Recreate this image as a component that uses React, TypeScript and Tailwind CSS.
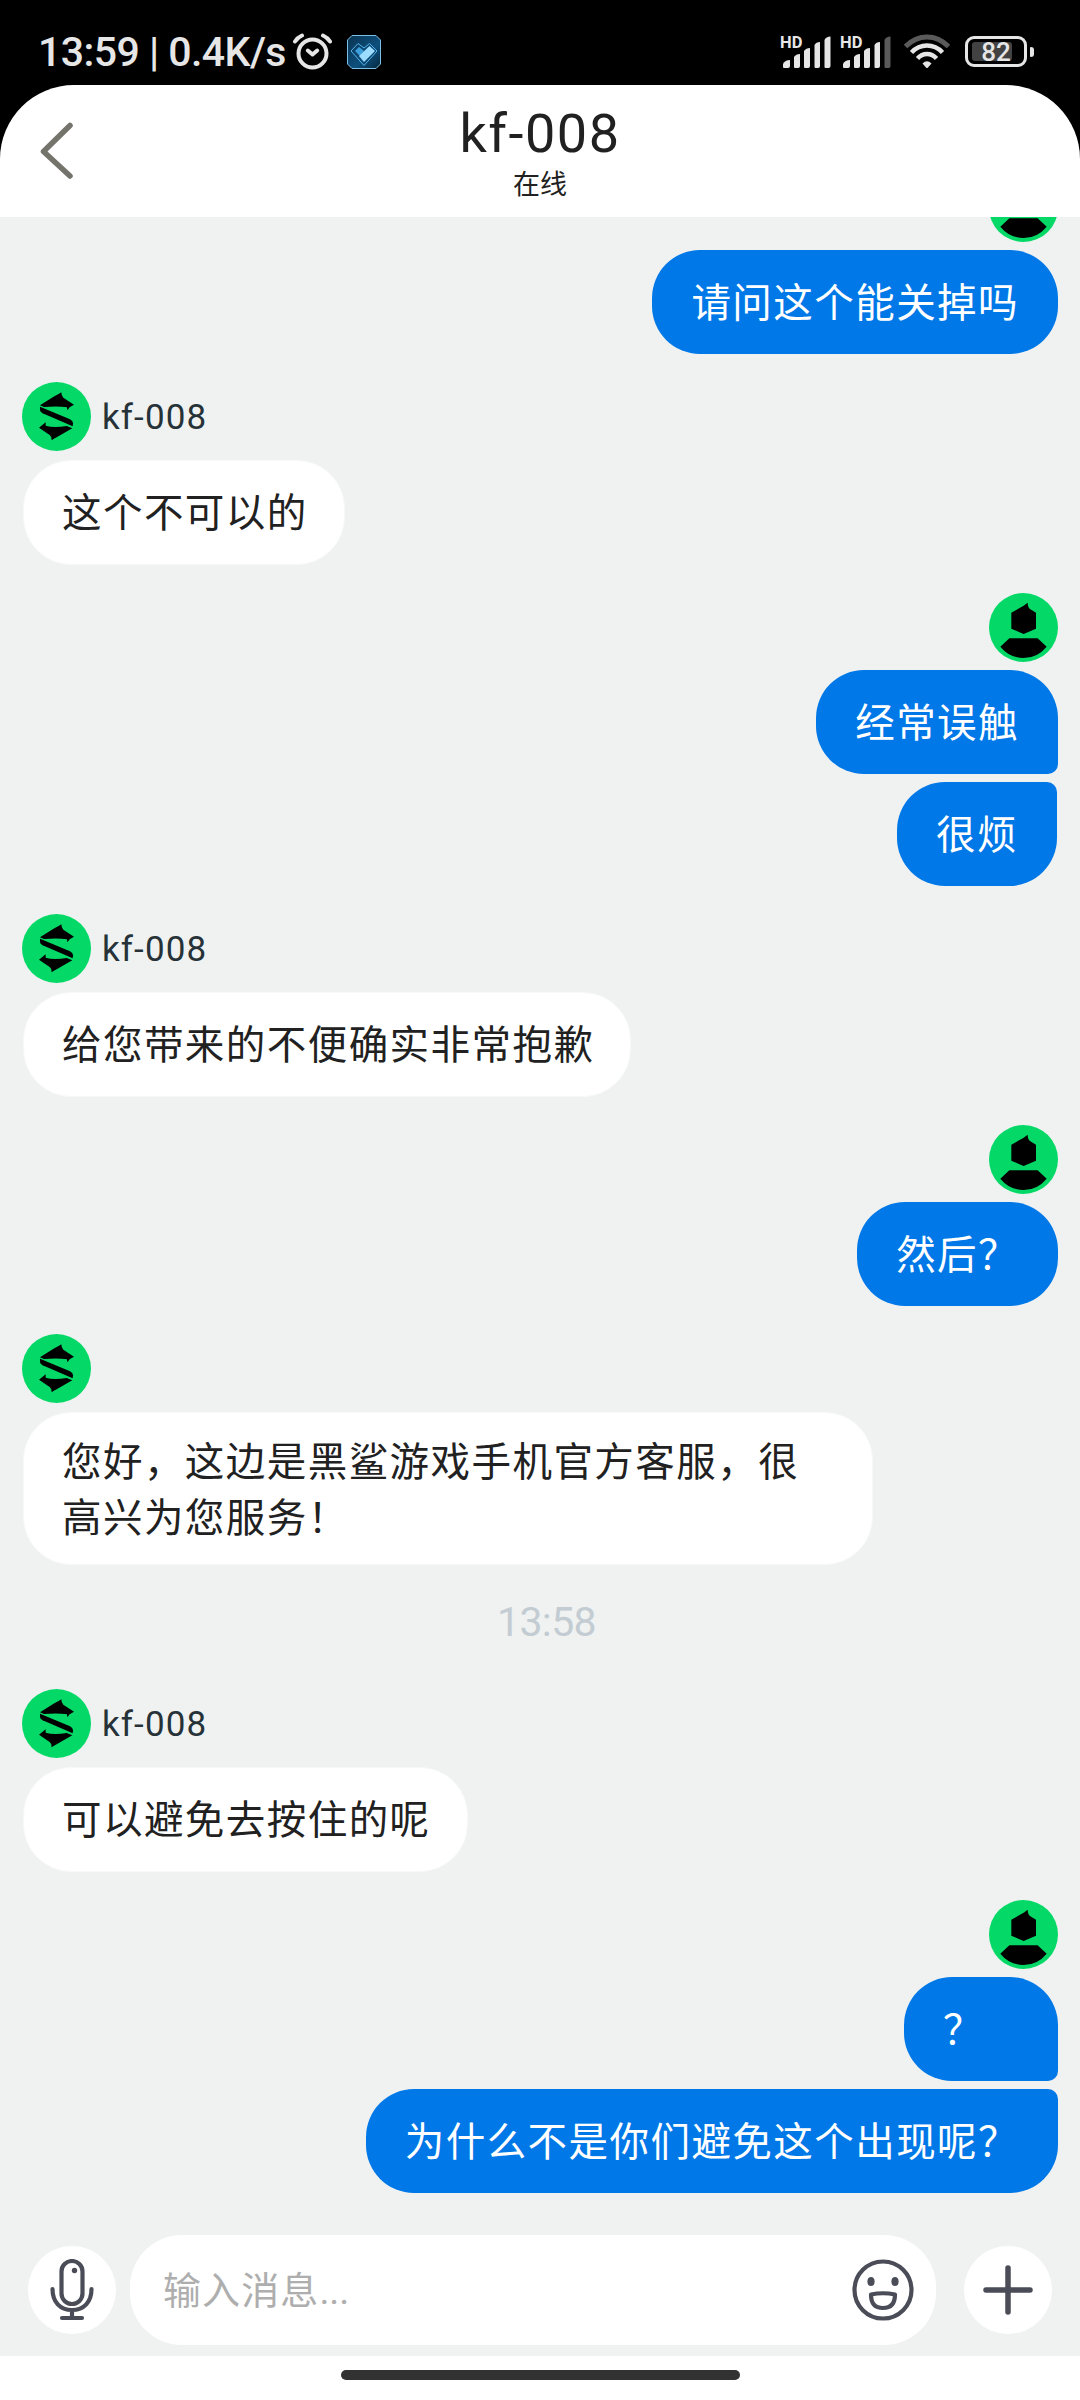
import clsx from 'clsx'

type Message = {
  id: number
  text: string
  shape?: string
}

type Group = {
  id: number
  from: 'me' | 'agent'
  name?: string
  time?: string
  messages: Message[]
}

const GROUPS: Group[] = [
  { id: 1, from: 'me', messages: [{ id: 1, text: '请问这个能关掉吗' }] },
  { id: 2, from: 'agent', name: 'kf-008', messages: [{ id: 2, text: '这个不可以的' }] },
  {
    id: 3,
    from: 'me',
    messages: [
      { id: 3, text: '经常误触', shape: 'rounded-br-[10px]' },
      { id: 4, text: '很烦', shape: 'rounded-tr-[10px] mr-px' },
    ],
  },
  { id: 4, from: 'agent', name: 'kf-008', messages: [{ id: 5, text: '给您带来的不便确实非常抱歉' }] },
  { id: 5, from: 'me', messages: [{ id: 6, text: '然后？' }] },
  { id: 6, from: 'agent', messages: [{ id: 7, text: '您好，这边是黑鲨游戏手机官方客服，很高兴为您服务！' }] },
  { id: 7, from: 'agent', name: 'kf-008', time: '13:58', messages: [{ id: 8, text: '可以避免去按住的呢' }] },
  {
    id: 8,
    from: 'me',
    messages: [
      { id: 9, text: '？', shape: 'rounded-br-[10px]' },
      { id: 10, text: '为什么不是你们避免这个出现呢？', shape: 'rounded-tr-[10px]' },
    ],
  },
]

function AgentAvatar() {
  return (
    <svg viewBox="0 0 207 207" className="size-[69px] shrink-0">
      <circle cx="103.5" cy="103.5" r="103.5" fill="#04d967" />
      <path d="M54 70 L97 43 Q110 37 118 31 Q118 42 124 47 L156 68 L143 76 L136 85 L135 76 Q108 71 66 75 Z" />
      <path d="M54 74 L144 112 Q153 116 153 124 L152 133 L62 94 Q54 90 54 84 Z" />
      <path d="M51 137 L71 121 L71 131 Q95 139 134 132 L151 139 L104 166 Q95 171 89 175 Q90 164 83 159 Z" />
    </svg>
  )
}

function UserAvatar() {
  return (
    <svg viewBox="0 0 207 207" className="size-[69px] shrink-0">
      <circle cx="103.5" cy="103.5" r="103.5" fill="#04d967" />
      <path d="M67 59 L104 38 L116 29 Q116 43 124 49 L141 59 V107 L104 123 L67 107 Z" />
      <path d="M61 136 H146 L173 161 Q145 195 104 195 Q62 195 34 161 Z" />
    </svg>
  )
}

function Signal({ weak }: { weak?: boolean }) {
  return (
    <svg viewBox="0 0 50 34" className="h-[34px] w-[50px] overflow-visible" fill="#e6e6e6">
      <text x="-1" y="12.5" fontSize="16.5" fontWeight="700" fontFamily="Roboto, sans-serif">HD</text>
      <path d="M2 32 V29 Q4 25 9 25 V31 Q9 33 7 33 H3 Q2 33 2 32 Z" />
      <path d="M13 32 V22 Q15 19 19 19 V31 Q19 33 17 33 H14 Q13 33 13 32 Z" />
      <path d="M23 32 V16 Q25 13 29 13 V31 Q29 33 27 33 H24 Q23 33 23 32 Z" />
      <path d="M33.500 32 V10 Q35 7 39 7 V31 Q39 33 37 33 H34.500 Q33.500 33 33.500 32 Z" />
      <path
        d="M43.500 32 V5 Q45 1.500 49.500 1.500 V31 Q49.500 33 47.500 33 H44.500 Q43.500 33 43.500 32 Z"
        fill={weak ? '#5a5a5a' : '#e6e6e6'}
      />
    </svg>
  )
}

function StatusBar() {
  return (
    <div className="flex h-[85px] items-start justify-between pt-[33px] pr-[46px] pl-[38px]">
      <div className="flex h-[37px] items-center">
        <span className="w-[254px] pt-[2px] text-[41px] leading-[37px] font-medium tracking-[-0.55px] whitespace-pre text-[#e6e6e6]">
          13:59 | 0.4K/s
        </span>
        <svg viewBox="0 0 40 37" className="h-[37px] w-[40px]" fill="none" stroke="#e6e6e6" strokeWidth="4" strokeLinecap="round">
          <circle cx="20.500" cy="20.500" r="14" />
          <path d="M15.800 17.500 L20.500 21.500 L25.200 17.500" strokeLinejoin="round" />
          <path d="M3 8.500 Q5.500 4.500 10 2.500 M38 8.500 Q35.500 4.500 31 2.500" />
        </svg>
        <svg viewBox="0 0 34 34" className="ml-[15px] size-[34px]">
          <defs>
            <linearGradient id="app" x1="0" y1="0" x2="1" y2="1">
              <stop offset="0" stopColor="#0a3350" />
              <stop offset="0.6" stopColor="#0d4f7c" />
              <stop offset="1" stopColor="#06283f" />
            </linearGradient>
          </defs>
          <path d="M5 .5 H29 L33.500 5 V29 L29 33.500 H5 L.5 29 V5 Z" fill="url(#app)" stroke="#7cc0e6" />
          <path d="M4 16 L11 8.500 L17 13 L22.500 8.500 L30 16 L17 30.500 Z" fill="none" stroke="#54b4ea" />
          <path d="M8 16 L12 12 L17 16 L13 21 Z" fill="#3c9fdc" />
          <path d="M12 21 L22.500 11 L28 16 L17 27 Z" fill="#9bdcff" />
        </svg>
      </div>
      <div className="flex h-[37px] items-center">
        <Signal />
        <div className="w-[10px]" />
        <Signal weak />
        <svg viewBox="0 0 46 35" className="ml-[13px] h-[35px] w-[46px]" fill="none" stroke="#e6e6e6" strokeWidth="4.500">
          <path d="M1.500 12.500 Q11 3 23 3 T44.500 12.500" stroke="#5a5a5a" strokeWidth="5" />
          <path d="M7.500 18.500 Q14 11.500 23 11.500 T38.500 18.500" />
          <path d="M13.500 24.500 Q17.500 20 23 20 T32.500 24.500" />
          <path d="M18.500 29.500 Q23 25 27.500 29.500 L24 33.500 Q23 34.500 22 33.500 Z" fill="#e6e6e6" stroke="none" />
        </svg>
        <div className="ml-[15px] flex items-center gap-[3px]">
          <div className="relative flex h-[31px] w-[62px] items-center justify-center rounded-[9px] border-3 border-[#e6e6e6]">
            <div className="absolute top-[3px] left-[4px] h-[19px] w-[40px] rounded-[3px] bg-[#424242]" />
            <span className="relative text-[26px] leading-none font-medium text-[#e6e6e6]">82</span>
          </div>
          <div className="h-[10px] w-[4px] rounded-r-[3px] rounded-l-[1px] bg-[#e6e6e6]" />
        </div>
      </div>
    </div>
  )
}

function Header() {
  return (
    <div className="flex h-[132px] shrink-0 items-center rounded-t-[74px] bg-white text-[#212121]">
      <svg viewBox="0 0 34 58" className="ml-[40px] h-[58px] w-[34px]" fill="none" stroke="#74736c" strokeWidth="5.500" strokeLinecap="round">
        <path d="M30 3.500 L3.500 29.500 L30 54" strokeLinejoin="round" />
      </svg>
      <div className="flex flex-1 flex-col items-center pt-[4px] pr-[74px]">
        <div className="text-[54px] leading-[62px] tracking-[1.5px]">kf-008</div>
        <div className="mt-[2px] text-[27px] leading-[36px]">在线</div>
      </div>
    </div>
  )
}

function Bubble({ message, mine }: { message: Message; mine: boolean }) {
  const long = message.text.length > 18
  return (
    <div
      className={clsx(
        'rounded-[48px] text-[39.5px] tracking-[1.45px]',
        mine
          ? 'h-[104px] min-w-[154px] bg-[#0078e7] pr-[39px] pl-[39px] leading-[107px] text-white'
          : 'ml-px border border-[#f7f9f8] bg-white pl-[38px] text-[#212121]',
        !mine && (long ? 'h-[153px] w-[850px] pt-[22px] pr-[60px] leading-[56px]' : 'h-[105px] pr-[36px] leading-[106px]'),
        message.shape,
      )}
    >
      {message.text}
    </div>
  )
}

function MessageGroup({ group }: { group: Group }) {
  const mine = group.from === 'me'
  return (
    <>
      {group.time && (
        <div className="-mt-[28px] h-[96px] w-full shrink-0 pt-[36px] pl-[13px] text-center text-[41px] leading-[42px] tracking-[-0.6px] text-[#c3ccd2]">
          {group.time}
        </div>
      )}
      <div className={clsx('flex shrink-0 flex-col', mine ? 'items-end gap-[8px]' : 'items-start gap-[9px]')}>
        <div className="flex items-center gap-[11px]">
          {mine ? <UserAvatar /> : <AgentAvatar />}
          {group.name && (
            <span className="pt-[2px] text-[35px] leading-[40px] tracking-[1.1px] text-[#263238]">{group.name}</span>
          )}
        </div>
        {group.messages.map((m) => (
          <Bubble key={m.id} message={m} mine={mine} />
        ))}
      </div>
    </>
  )
}

function InputBar() {
  return (
    <div className="flex h-[163px] shrink-0 items-center pl-[28px]">
      <button className="mt-[31px] flex size-[88px] items-center justify-center rounded-full bg-white">
        <svg viewBox="0 0 44 62" className="h-[62px] w-[44px]" fill="none" stroke="#4a4d57" strokeWidth="4.200" strokeLinecap="round">
          <rect x="11.500" y="2" width="21" height="43" rx="10.500" />
          <circle cx="24.500" cy="11.500" r="2.700" fill="#4a4d57" stroke="none" />
          <path d="M2.500 30 C2.500 43 10 51 22 51 S41.500 43 41.500 30 M22 51 V58 M12 59 H32" />
        </svg>
      </button>
      <div className="mt-[31px] ml-[14px] flex h-[110px] w-[806px] items-center justify-between rounded-[52px] bg-white pr-[22px] pl-[33px]">
        <span className="pt-[2px] text-[38px] leading-[56px] tracking-[1.1px] text-[#aeaeae]">
          输入消息<span className="tracking-[-0.1px]">...</span>
        </span>
        <svg viewBox="0 0 62 62" className="size-[62px]" fill="none" stroke="#4a4d57" strokeWidth="4.200">
          <circle cx="31" cy="31" r="28.500" />
          <ellipse cx="19" cy="22.500" rx="3.600" ry="4.500" fill="#4a4d57" stroke="none" />
          <ellipse cx="43" cy="22.500" rx="3.600" ry="4.500" fill="#4a4d57" stroke="none" />
          <path d="M19 35.500 Q31 33 43 35.500 Q43 49 31 49 Q19 49 19 35.500 Z" strokeLinejoin="round" />
        </svg>
      </div>
      <button className="mt-[31px] ml-[28px] flex size-[88px] items-center justify-center rounded-full bg-white">
        <svg viewBox="0 0 50 50" className="size-[50px]" stroke="#4a4d57" strokeWidth="5.500" strokeLinecap="round">
          <path d="M25 3 V47 M3 25 H47" />
        </svg>
      </button>
    </div>
  )
}

export default function App() {
  return (
    <div
      lang="zh-CN"
      className="flex h-[2400px] w-[1080px] flex-col overflow-hidden bg-black font-[Roboto,'Noto_Sans_CJK_SC',sans-serif]"
    >
      <StatusBar />
      <Header />
      <div className="flex h-[1976px] shrink-0 flex-col justify-end gap-[28px] overflow-hidden bg-[#eff2f1] px-[22px]">
        {GROUPS.map((g) => (
          <MessageGroup key={g.id} group={g} />
        ))}
      </div>
      <div className="bg-[#eff2f1]">
        <InputBar />
      </div>
      <div className="flex h-[44px] shrink-0 justify-center bg-white pt-[14px]">
        <div className="h-[10px] w-[399px] rounded-full bg-[#323232]" />
      </div>
    </div>
  )
}
